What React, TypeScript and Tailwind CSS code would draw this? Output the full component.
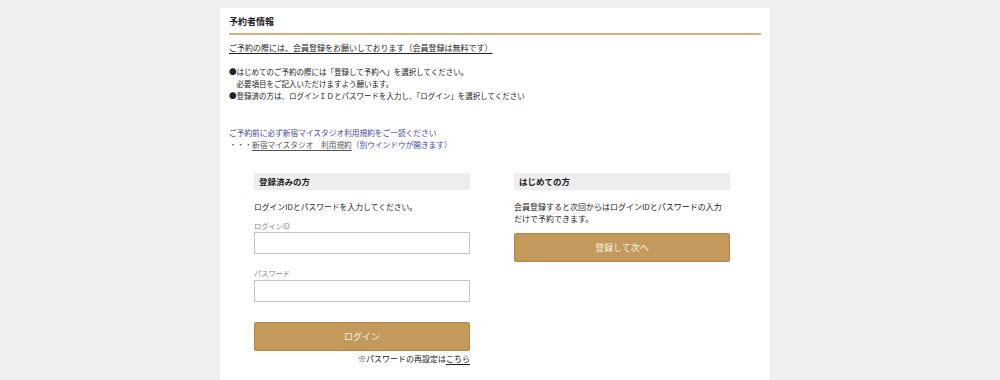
import React from "react";

export default function App() {
  const font = { fontFamily: '"Noto Sans CJK JP", "Noto Sans", sans-serif' };
  return (
    <div className="min-h-[380px] w-[1000px] bg-[#efefef] pt-[8px]" style={font}>
      <div className="ml-[220px] w-[550px] min-h-[372px] bg-white px-[9px] pb-[20px]">
        <div className="pt-[8px] pb-[5px] text-[9px] font-bold leading-[12px] text-[#222]">予約者情報</div>
        <div className="h-[2px] bg-[#d4b27d]" />
        <div className="mt-[7px] text-[8px] leading-[12px] text-[#222] underline underline-offset-2">
          ご予約の際には、会員登録をお願いしております（会員登録は無料です）
        </div>
        <div className="mt-[12px] text-[7.5px] leading-[12px] text-[#222]">
          <div>●はじめてのご予約の際には「登録して予約へ」を選択してください。</div>
          <div className="pl-[7.5px]">必要項目をご記入いただけますよう願います。</div>
          <div>●登録済の方は、ログインＩＤとパスワードを入力し、「ログイン」を選択してください</div>
        </div>
        <div className="mt-[25px] text-[7.7px] leading-[12px] text-[#4646a6]">
          <div>ご予約前に必ず新宿マイスタジオ利用規約をご一読ください</div>
          <div>
            ・・・<span className="text-[#555] underline underline-offset-2">新宿マイスタジオ　利用規約</span>（別ウインドウが開きます）
          </div>
        </div>
        <div className="mt-[22px] flex gap-[44px] pl-[25px]">
          <div className="flex w-[216px] flex-col">
            <div className="flex h-[17px] items-center bg-[#eeeeee] pl-[5px] text-[8.5px] font-bold text-[#222]">登録済みの方</div>
            <div className="mt-[11px] text-[7.8px] leading-[12px] text-[#222]">ログインIDとパスワードを入力してください。</div>
            <div className="mt-[8px] text-[7.2px] leading-[10px] text-[#888]">ログインID</div>
            <div className="mt-[1px] h-[22px] border border-[#c4c4c4] bg-white" />
            <div className="mt-[14px] text-[7.2px] leading-[10px] text-[#888]">パスワード</div>
            <div className="mt-[2px] h-[22px] border border-[#c4c4c4] bg-white" />
            <div className="mt-[20px] flex h-[29px] items-center justify-center rounded-[2px] border border-[#b08748] bg-[#c39a5c] text-[9px] text-[#fbf3e4]">ログイン</div>
            <div className="mt-[2px] text-right text-[8px] leading-[12px] text-[#222]">
              ※パスワードの再設定は<span className="underline underline-offset-2">こちら</span>
            </div>
          </div>
          <div className="flex w-[216px] flex-col">
            <div className="flex h-[17px] items-center bg-[#eeeeee] pl-[5px] text-[8.5px] font-bold text-[#222]">はじめての方</div>
            <div className="mt-[11px] text-[8px] leading-[12px] text-[#222]">
              会員登録すると次回からはログインIDとパスワードの入力<br />だけで予約できます。
            </div>
            <div className="mt-[8px] flex h-[29px] items-center justify-center rounded-[2px] border border-[#b08748] bg-[#c39a5c] text-[9px] text-[#fbf3e4]">登録して次へ</div>
          </div>
        </div>
      </div>
    </div>
  );
}
